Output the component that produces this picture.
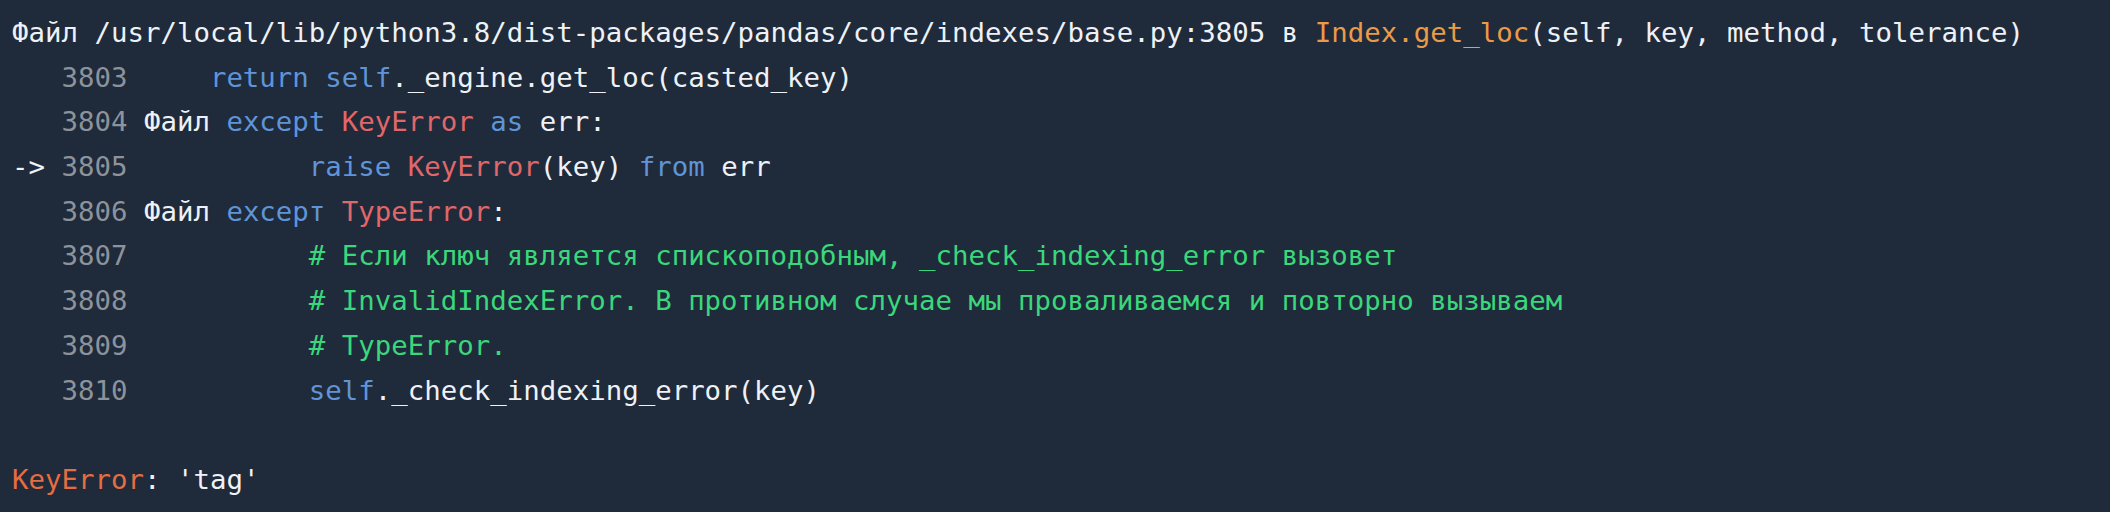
const C = {
  w: "text-[#eef1f5]",
  n: "text-[#8d939c]",
  b: "text-[#5f95d8]",
  r: "text-[#e0676a]",
  o: "text-[#eb9a48]",
  g: "text-[#3ad77c]",
  e: "text-[#e46d43]",
};

type Seg = [keyof typeof C, string];

const lines: Seg[][] = [
  [
    ["w", "Файл /usr/local/lib/python3.8/dist-packages/pandas/core/indexes/base.py:3805 в "],
    ["o", "Index.get_loc"],
    ["w", "(self, key, method, tolerance)"],
  ],
  [
    ["n", "   3803"],
    ["w", "     "],
    ["b", "return"],
    ["w", " "],
    ["b", "self"],
    ["w", "._engine.get_loc(casted_key)"],
  ],
  [
    ["n", "   3804"],
    ["w", " Файл "],
    ["b", "except"],
    ["w", " "],
    ["r", "KeyError"],
    ["w", " "],
    ["b", "as"],
    ["w", " err:"],
  ],
  [
    ["w", "-> "],
    ["n", "3805"],
    ["w", "           "],
    ["b", "raise"],
    ["w", " "],
    ["r", "KeyError"],
    ["w", "(key) "],
    ["b", "from"],
    ["w", " err"],
  ],
  [
    ["n", "   3806"],
    ["w", " Файл "],
    ["b", "excepт"],
    ["w", " "],
    ["r", "TypeError"],
    ["w", ":"],
  ],
  [
    ["n", "   3807"],
    ["w", "           "],
    ["g", "# Если ключ является спископодобным, _check_indexing_error вызовет"],
  ],
  [
    ["n", "   3808"],
    ["w", "           "],
    ["g", "# InvalidIndexError. В противном случае мы проваливаемся и повторно вызываем"],
  ],
  [
    ["n", "   3809"],
    ["w", "           "],
    ["g", "# TypeError."],
  ],
  [
    ["n", "   3810"],
    ["w", "           "],
    ["b", "self"],
    ["w", "._check_indexing_error(key)"],
  ],
  [],
  [
    ["e", "KeyError"],
    ["w", ": 'tag'"],
  ],
];

export default function App() {
  return (
    <div className="h-[512px] w-full overflow-hidden bg-[#1f2a3a] pl-[12px] pt-[11px] font-['DejaVu_Sans_Mono',monospace] text-[27.4px] leading-[44.7px]">
      {lines.map((line, i) => (
        <div key={i} className="h-[44.7px] whitespace-pre">
          {line.map(([c, t], j) => (
            <span key={j} className={C[c]}>
              {t}
            </span>
          ))}
        </div>
      ))}
    </div>
  );
}
